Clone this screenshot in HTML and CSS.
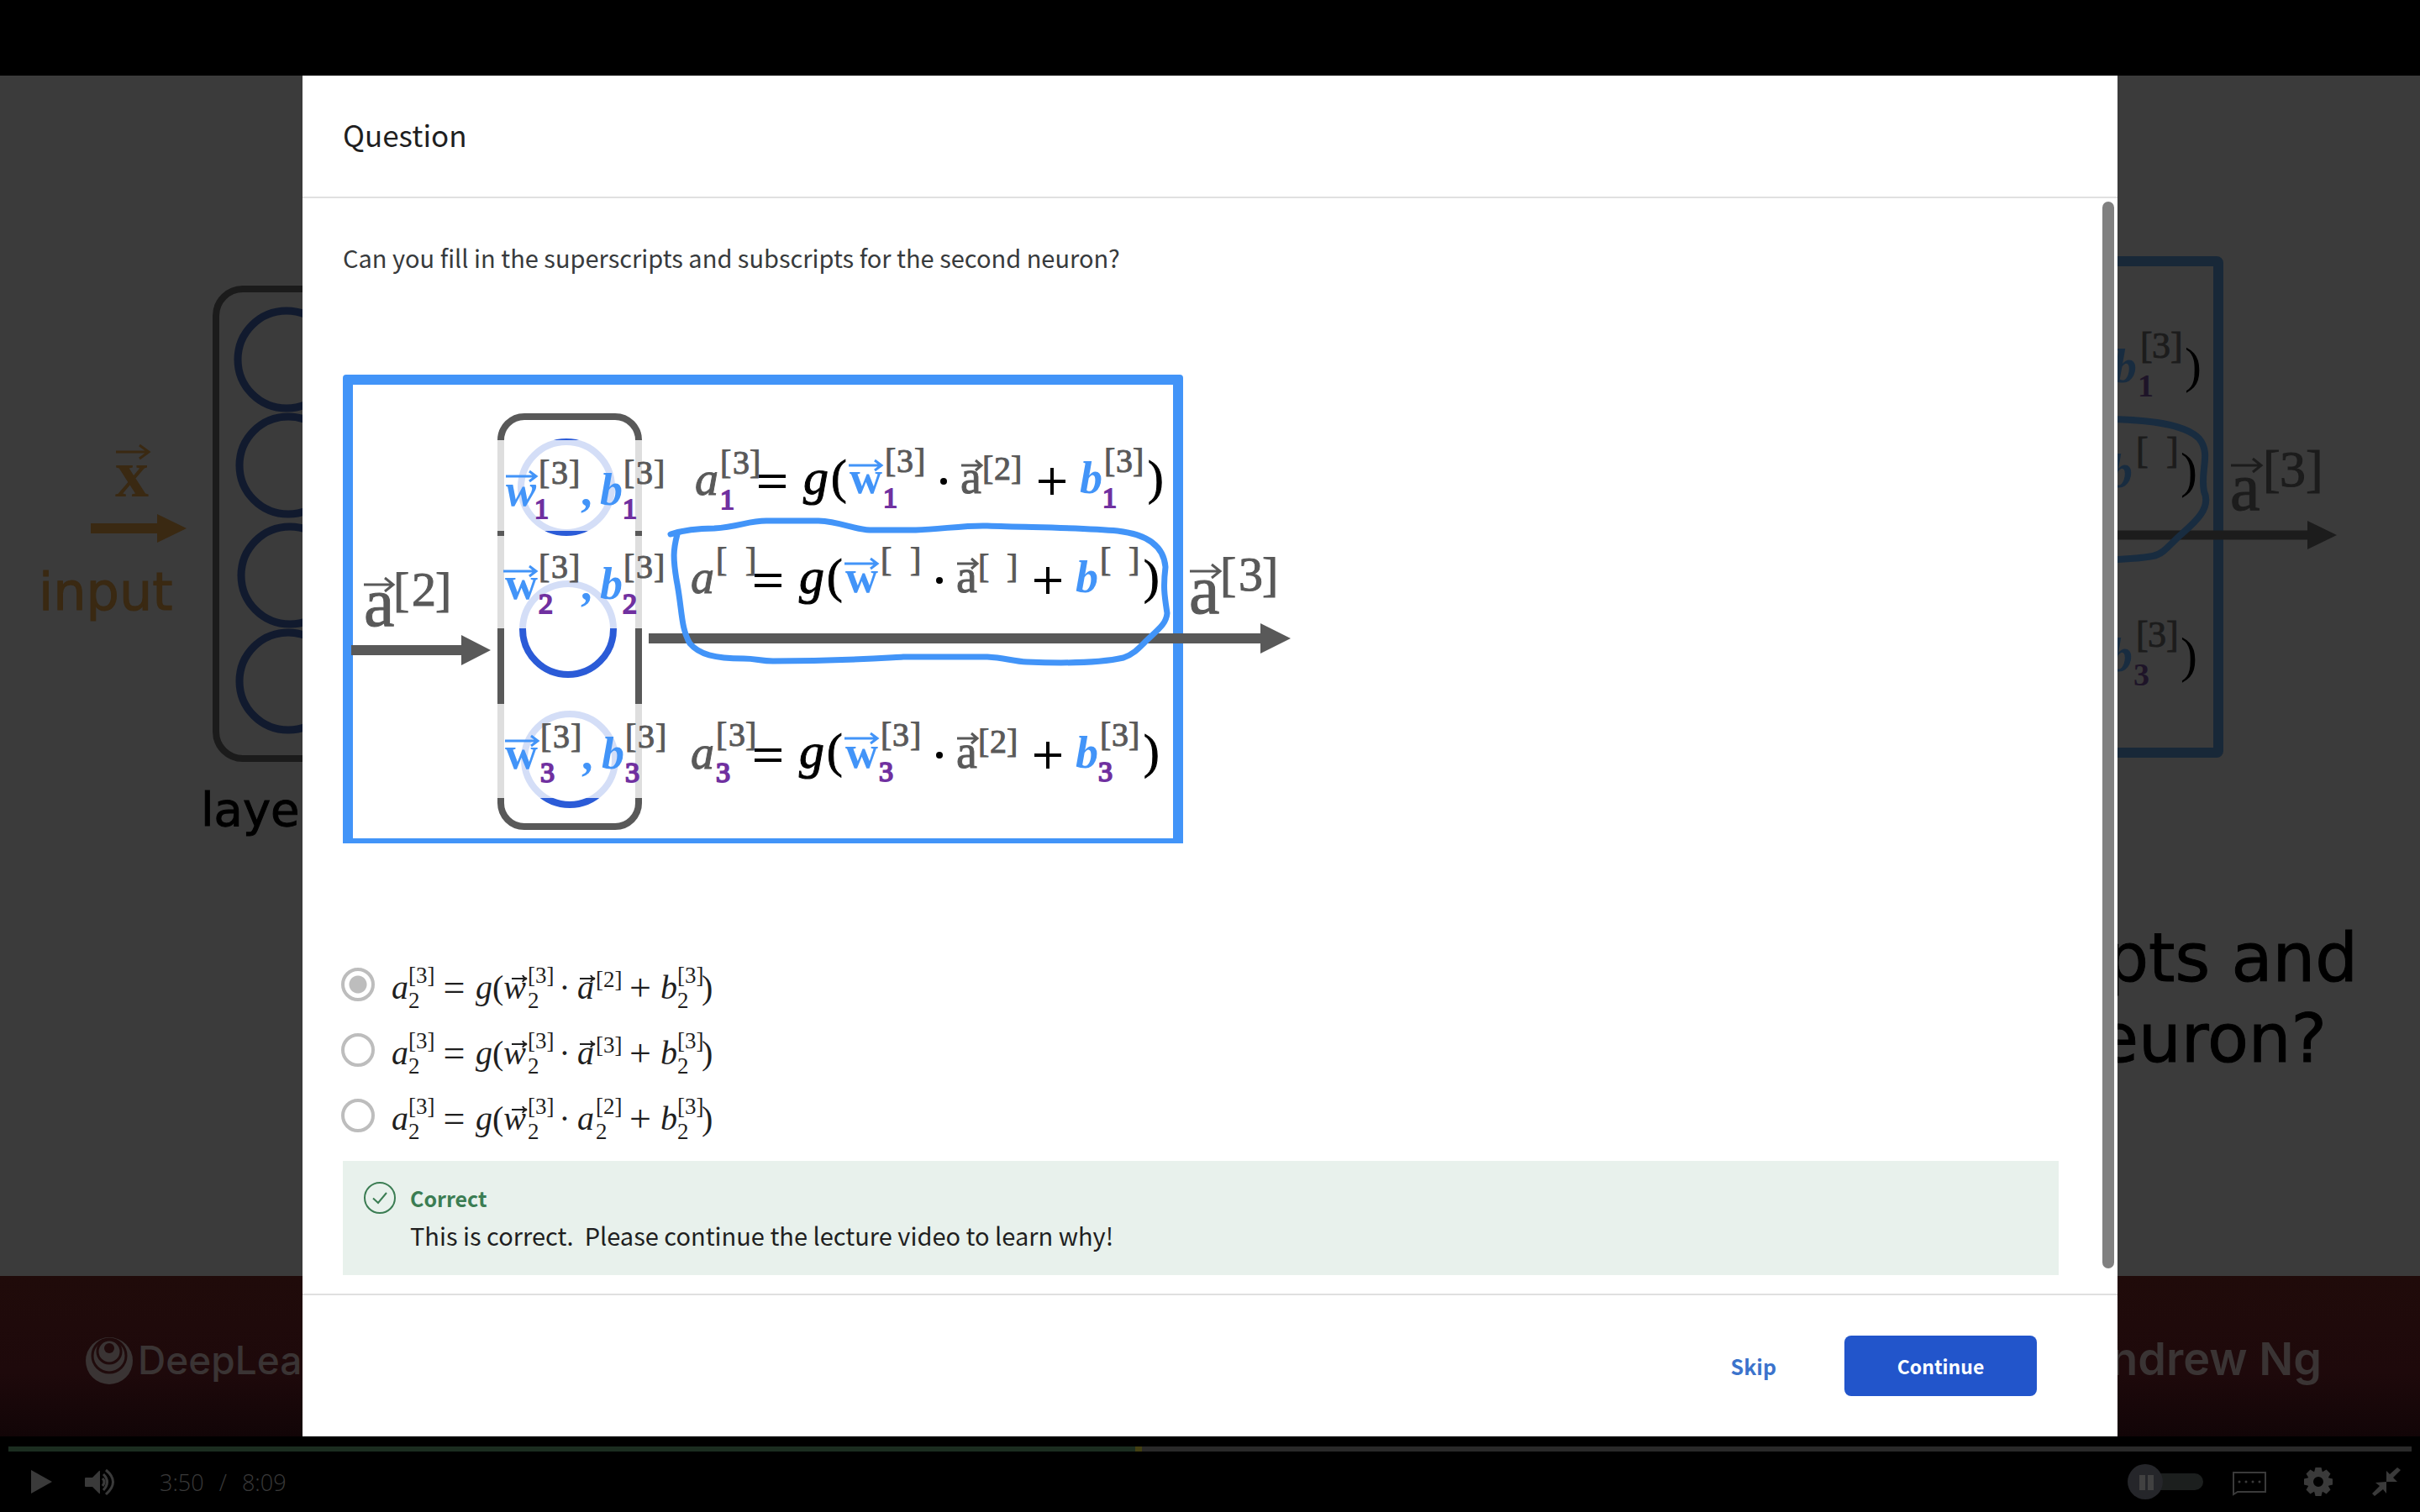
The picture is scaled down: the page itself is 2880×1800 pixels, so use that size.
FILE: index.html
```html
<!DOCTYPE html>
<html lang="en">
<head>
<meta charset="utf-8">
<meta name="viewport" content="width=device-width, initial-scale=1">
<title>Lecture video: Question</title>
<link rel="stylesheet" href="styles.css">
</head>
<body>
<main class="player">
  <div class="stage">
    <svg class="scene" viewBox="0 90 2880 1620" preserveAspectRatio="xMidYMid slice" aria-hidden="true">
      <defs>
        <linearGradient id="band" x1="0" y1="0" x2="0" y2="1">
          <stop offset="0" stop-color="#200b0a"/>
          <stop offset=".6" stop-color="#1e090b"/>
          <stop offset="1" stop-color="#120507"/>
        </linearGradient>
      </defs>
      <rect x="0" y="90" width="2880" height="1620" fill="#3b3b3b"/>
      <rect x="0" y="1519" width="2880" height="191" fill="url(#band)"/>
      <rect x="257" y="344" width="300" height="559" rx="32" fill="none" stroke="#1b1b1b" stroke-width="8"/>
      <g fill="none" stroke="#111a2e" stroke-width="9">
        <circle cx="341" cy="428" r="58"/><circle cx="343" cy="554" r="58"/>
        <circle cx="345" cy="685" r="58"/><circle cx="343" cy="811" r="58"/>
      </g>
      <g class="gold">
        <text class="serif bold s80" x="137" y="591">x</text>
        <path d="M138 538H177M166 530L177 538L166 546" fill="none" stroke="#3a2912" stroke-width="3"/>
        <path d="M108 623H187V612L222 629L187 646V635H108Z"/>
        <text class="sans gold-line s62" x="46" y="726">input</text>
      </g>
      <text class="sans s56 ink" x="239" y="983">layer</text>
      <rect x="2000" y="311" width="640" height="585" rx="2" fill="none" stroke="#182838" stroke-width="12"/>
      <path d="M2400 637H2750" stroke="#1c1c1c" stroke-width="11"/>
      <path d="M2746 620L2781 637L2746 654Z" fill="#1c1c1c"/>
      <path d="M2500 499C2560 499 2600 505 2617 522C2632 540 2618 560 2623 585C2632 605 2612 622 2596 636C2584 646 2575 660 2562 662C2540 666 2520 666 2500 667" fill="none" stroke="#182c40" stroke-width="8"/>
      <g>
        <text class="serif bold ital dim-blue s58" x="2514" y="455">b</text>
        <text class="serif dim-grey s44" x="2547 2561 2583" y="426">[3]</text>
        <text class="serif bold dim-violet s38" x="2544" y="472">1</text>
        <text class="serif ink s60" x="2600" y="455">)</text>
        <text class="serif bold ital dim-blue s58" x="2509" y="580">b</text>
        <text class="serif dim-grey s44" x="2542 2578" y="551">[]</text>
        <text class="serif ink s60" x="2595" y="580">)</text>
        <text class="serif bold ital dim-blue s58" x="2509" y="799">b</text>
        <text class="serif dim-grey s44" x="2542 2556 2578" y="770">[3]</text>
        <text class="serif bold dim-violet s38" x="2539" y="816">3</text>
        <text class="serif ink s60" x="2595" y="800">)</text>
        <text class="serif dim-grey s80" x="2654" y="607">a</text>
        <path d="M2655 554H2691M2681 546L2691 554L2681 562" fill="none" stroke="#1c1c1c" stroke-width="3"/>
        <text class="serif dim-grey s62" x="2693 2713 2744" y="579">[3]</text>
      </g>
      <text class="sans s80 ink" x="2806" y="1168" text-anchor="end">superscripts and</text>
      <text class="sans s80 ink" x="2769" y="1264" text-anchor="end">second neuron?</text>
      <g fill="none" stroke="#3a3434">
        <circle cx="130" cy="1620" r="28" fill="#3a3434" stroke="none"/>
        <circle cx="130" cy="1614" r="20" stroke="#200b0c" stroke-width="3"/>
        <circle cx="130" cy="1609" r="14" stroke="#200b0c" stroke-width="3"/>
        <circle cx="130" cy="1605" r="6" fill="#200b0c" stroke="none"/>
      </g>
      <text class="brand s46" x="164" y="1636">DeepLearning.AI</text>
      <text class="brand heavy s54" x="2763" y="1637" text-anchor="end">Andrew Ng</text>
    </svg>

    <section class="dialog" role="dialog" aria-labelledby="dialog-title">
      <header class="dialog-head"><h1 id="dialog-title">Question</h1></header>
      <div class="dialog-body">
        <p class="prompt" id="prompt">Can you fill in the superscripts and subscripts for the second neuron?</p>
        <svg class="figure" viewBox="408 446 1140 558" role="img" aria-label="Layer with three neurons and their equations">
          <rect class="paper" x="408" y="446" width="1140" height="558"/>
          <path fill="#4294f8" d="M412 446H1404Q1408 446 1408 450V1004H408V450Q408 446 412 446ZM420 458V998H1396V458Z" fill-rule="evenodd"/>
          <rect x="596" y="496" width="164" height="488" rx="28" fill="none" stroke="#595959" stroke-width="8"/>
          <g fill="none" stroke="#2b5bd7" stroke-width="8">
            <circle cx="674" cy="580" r="54"/><circle cx="676" cy="749" r="54"/><circle cx="678" cy="904" r="54"/>
          </g>
          <g fill="#fff" fill-opacity=".8">
            <rect x="588" y="524" width="184" height="108"/><rect x="588" y="638" width="184" height="110"/><rect x="588" y="838" width="184" height="112"/>
          </g>
          <g fill="#595959">
            <path d="M418 768H549V756L584 774L549 792V780H418Z"/>
            <path d="M772 754H1500V742L1536 760L1500 778V766H772Z"/>
          </g>
          <path d="M798 636Q820 629 850 629C880 627 890 620 912 620H974C1000 621 1015 630 1035 631H1090C1120 630 1150 625 1175 626C1230 628 1290 628 1330 632C1365 636 1385 650 1387 675C1384 700 1386 710 1389 730C1388 742 1380 748 1365 762C1355 772 1350 778 1337 783C1310 789 1270 790 1222 788C1205 787 1195 783 1175 782H1075C1040 784 1000 787 920 787C905 787 900 784 885 784C850 784 832 779 821 766C810 748 812 725 805 690C801 665 801 655 806 636" fill="none" stroke="#4294f8" stroke-width="7" stroke-linecap="round" stroke-linejoin="round"/>

          <g>
            <text class="serif grey s82" x="433" y="745">a</text>
            <path class="vec" d="M433 696H467M458 688L468 696L458 704"/>
            <text class="serif grey s58" x="468 490 518" y="721">[2]</text>
            <text class="serif grey s82" x="1415" y="730">a</text>
            <path class="vec" d="M1416 680H1451M1442 672L1452 680L1442 688"/>
            <text class="serif grey s58" x="1452 1474 1502" y="703">[3]</text>
          </g>

          <g>
            <text class="serif bold ital blue s54" x="602" y="602">w</text><path class="vec blue-line" d="M602 567H638M630 561L638 567L630 573"/>
            <text class="serif grey s40" x="641 656 677" y="576">[3]</text><text class="serif violet s34" x="636" y="617">1</text>
            <text class="serif bold blue s54" x="691" y="602">,</text>
            <text class="serif bold ital blue s54" x="714" y="601">b</text><text class="serif grey s40" x="742 757 778" y="576">[3]</text><text class="serif violet s34" x="741" y="617">1</text>
          </g>
          <g>
            <text class="serif bold blue s54" x="601" y="713">w</text><path class="vec blue-line" d="M599 680H638M630 674L638 680L630 686"/>
            <text class="serif grey s40" x="641 656 677" y="688">[3]</text><text class="serif violet s34" x="641" y="730">2</text>
            <text class="serif bold blue s54" x="691" y="714">,</text>
            <text class="serif bold ital blue s54" x="714" y="713">b</text><text class="serif grey s40" x="742 757 778" y="688">[3]</text><text class="serif violet s34" x="741" y="730">2</text>
          </g>
          <g>
            <text class="serif bold blue s54" x="601" y="915">w</text><path class="vec blue-line" d="M601 882H640M632 876L640 882L632 888"/>
            <text class="serif grey s40" x="643 658 679" y="890">[3]</text><text class="serif violet s34" x="643" y="931">3</text>
            <text class="serif bold blue s54" x="692" y="916">,</text>
            <text class="serif bold ital blue s54" x="716" y="915">b</text><text class="serif grey s40" x="744 759 780" y="890">[3]</text><text class="serif violet s34" x="744" y="931">3</text>
          </g>

          <g>
            <text class="serif ital grey s56" x="827" y="589">a</text><text class="serif grey s40" x="857 872 892" y="564">[3]</text><text class="serif violet s34" x="857" y="606">1</text>
            <path class="op" d="M903 567H935M903 579H935"/>
            <text class="serif ital dark s60" x="956" y="588">g</text><text class="serif dark s56" x="989" y="587">(</text>
            <text class="serif bold blue s54" x="1011" y="587">w</text><path class="vec blue-line" d="M1010 554H1049M1041 548L1049 554L1041 560"/>
            <text class="serif grey s40" x="1053 1067 1088" y="562">[3]</text><text class="serif violet s34" x="1051" y="604">1</text>
            <circle cx="1123" cy="573" r="4"/>
            <text class="serif grey s56" x="1143" y="587">a</text><path class="vec" d="M1144 554H1168M1161 548L1168 554L1161 560"/>
            <text class="serif grey s40" x="1169 1183 1203" y="571">[2]</text>
            <path class="op" d="M1236 573H1268M1252 557V589"/>
            <text class="serif bold ital blue s54" x="1285" y="587">b</text><text class="serif grey s40" x="1314 1328 1348" y="562">[3]</text><text class="serif violet s34" x="1312" y="604">1</text>
            <text class="serif dark s56" x="1366" y="588">)</text>
          </g>
          <g transform="translate(-5 118)">
            <text class="serif ital grey s56" x="827" y="588">a</text><text class="serif grey s40" x="857 892" y="562">[]</text>
            <path class="op" d="M903 567H935M903 579H935"/>
            <text class="serif ital dark s60" x="956" y="588">g</text><text class="serif dark s56" x="989" y="587">(</text>
            <text class="serif bold blue s54" x="1011" y="587">w</text><path class="vec blue-line" d="M1010 553H1049M1041 547L1049 553L1041 559"/>
            <text class="serif grey s40" x="1053 1088" y="562">[]</text>
            <circle cx="1123" cy="573" r="4"/>
            <text class="serif grey s56" x="1143" y="587">a</text><path class="vec" d="M1144 553H1168M1161 547L1168 553L1161 559"/>
            <text class="serif grey s40" x="1169 1203" y="570">[]</text>
            <path class="op" d="M1236 573H1268M1252 557V589"/>
            <text class="serif bold ital blue s54" x="1285" y="587">b</text><text class="serif grey s40" x="1314 1348" y="562">[]</text>
            <text class="serif dark s56" x="1366" y="588">)</text>
          </g>
          <g transform="translate(-5 326)">
            <text class="serif ital grey s56" x="827" y="589">a</text><text class="serif grey s40" x="857 872 892" y="562">[3]</text><text class="serif violet s34" x="857" y="605">3</text>
            <path class="op" d="M903 567H935M903 579H935"/>
            <text class="serif ital dark s60" x="956" y="588">g</text><text class="serif dark s56" x="989" y="587">(</text>
            <text class="serif bold blue s54" x="1011" y="588">w</text><path class="vec blue-line" d="M1010 553H1049M1041 547L1049 553L1041 559"/>
            <text class="serif grey s40" x="1053 1067 1088" y="562">[3]</text><text class="serif violet s34" x="1051" y="604">3</text>
            <circle cx="1123" cy="573" r="4"/>
            <text class="serif grey s56" x="1143" y="588">a</text><path class="vec" d="M1144 553H1168M1161 547L1168 553L1161 559"/>
            <text class="serif grey s40" x="1169 1183 1203" y="570">[2]</text>
            <path class="op" d="M1236 573H1268M1252 557V589"/>
            <text class="serif bold ital blue s54" x="1285" y="588">b</text><text class="serif grey s40" x="1314 1328 1348" y="562">[3]</text><text class="serif violet s34" x="1312" y="604">3</text>
            <text class="serif dark s56" x="1366" y="588">)</text>
          </g>
        </svg>

        <form class="options" role="radiogroup" aria-labelledby="prompt">
          <label class="option">
            <input type="radio" name="answer" checked>
            <span class="math"><i>a</i><span class="scripts"><span>[3]</span><span>2</span></span><span class="rel">=</span><i>g</i><span>(</span><i class="arrowed">w<svg viewBox="0 0 20 10"><path d="M1 5H18M14 1Q15 4 19 5Q15 6 14 9"/></svg></i><span class="scripts"><span>[3]</span><span>2</span></span><span class="dot">·</span><i class="arrowed">a<svg viewBox="0 0 20 10"><path d="M1 5H18M14 1Q15 4 19 5Q15 6 14 9"/></svg></i><span class="scripts single"><span>[2]</span></span><span class="plus">+</span><i>b</i><span class="scripts"><span>[3]</span><span>2</span></span><span>)</span></span>
          </label>
          <label class="option">
            <input type="radio" name="answer">
            <span class="math"><i>a</i><span class="scripts"><span>[3]</span><span>2</span></span><span class="rel">=</span><i>g</i><span>(</span><i class="arrowed">w<svg viewBox="0 0 20 10"><path d="M1 5H18M14 1Q15 4 19 5Q15 6 14 9"/></svg></i><span class="scripts"><span>[3]</span><span>2</span></span><span class="dot">·</span><i class="arrowed">a<svg viewBox="0 0 20 10"><path d="M1 5H18M14 1Q15 4 19 5Q15 6 14 9"/></svg></i><span class="scripts single"><span>[3]</span></span><span class="plus">+</span><i>b</i><span class="scripts"><span>[3]</span><span>2</span></span><span>)</span></span>
          </label>
          <label class="option">
            <input type="radio" name="answer">
            <span class="math"><i>a</i><span class="scripts"><span>[3]</span><span>2</span></span><span class="rel">=</span><i>g</i><span>(</span><i class="arrowed">w<svg viewBox="0 0 20 10"><path d="M1 5H18M14 1Q15 4 19 5Q15 6 14 9"/></svg></i><span class="scripts"><span>[3]</span><span>2</span></span><span class="dot">·</span><i class="arrowed">a</i><span class="scripts"><span>[2]</span><span>2</span></span><span class="plus">+</span><i>b</i><span class="scripts"><span>[3]</span><span>2</span></span><span>)</span></span>
          </label>
        </form>

        <div class="feedback" role="status">
          <svg class="feedback-icon" viewBox="0 0 40 40" aria-hidden="true"><circle cx="20" cy="20" r="18"/><path d="M12 20.500L18 26L28 14"/></svg>
          <div>
            <strong class="feedback-title">Correct</strong>
            <p class="feedback-text">This is correct.&nbsp; Please continue the lecture video to learn why!</p>
          </div>
        </div>
        <div class="scroll-thumb"></div>
      </div>
      <footer class="dialog-foot">
        <button class="btn-link" type="button">Skip</button>
        <button class="btn-primary" type="button">Continue</button>
      </footer>
    </section>
  </div>

  <div class="controls">
    <div class="progress"><div class="played" style="width:46.900%"></div><div class="cue"></div></div>
    <div class="bar">
      <div class="group left">
        <button type="button" aria-label="Play"><svg width="40" height="40" viewBox="0 0 40 40"><path fill="currentColor" d="M7 6L32 20L7 34Z"/></svg></button>
        <button type="button" aria-label="Volume"><svg width="40" height="40" viewBox="0 0 40 40"><path fill="currentColor" d="M2 15H10L18 7Q19 6 19 8V33Q19 35 18 34L10 26H2Q1 26 1 25V16Q1 15 2 15Z"/><path fill="none" stroke="currentColor" stroke-width="3" d="M22 16Q26 20 22 25M23 11Q32 20 23 30M26 6Q43 20 26 35"/></svg></button>
        <span class="time"><span>3:50</span><span>/</span><span>8:09</span></span>
      </div>
      <div class="group right">
        <button class="autoplay" type="button" role="switch" aria-checked="false" aria-label="Autoplay"><svg width="92" height="42" viewBox="0 0 92 42"><rect x="20" y="11" width="71" height="20" rx="10" fill="#1c1f1e"/><circle cx="22" cy="21" r="21" fill="#25262a"/><path fill="#414141" d="M15 13H22V31H15ZM25 13H32V31H25Z"/></svg></button>
        <button type="button" aria-label="Subtitles"><svg width="42" height="40" viewBox="0 0 42 40"><path fill="none" stroke="currentColor" stroke-width="2" d="M2 9H40V32H7L2 35Z"/><path stroke="currentColor" stroke-width="3" stroke-linecap="round" stroke-dasharray="0 8" d="M9 20H34"/></svg></button>
        <button type="button" aria-label="Settings"><svg width="40" height="40" viewBox="-20 -20 40 40"><g fill="currentColor"><path fill-rule="evenodd" d="M0-13A13 13 0 1 0 0 13A13 13 0 1 0 0-13ZM0-6A6 6 0 1 1 0 6A6 6 0 1 1 0-6Z"/><path id="tooth" d="M-3.500-17H3.500L5-11H-5Z"/><use href="#tooth" transform="rotate(45)"/><use href="#tooth" transform="rotate(90)"/><use href="#tooth" transform="rotate(135)"/><use href="#tooth" transform="rotate(180)"/><use href="#tooth" transform="rotate(225)"/><use href="#tooth" transform="rotate(270)"/><use href="#tooth" transform="rotate(315)"/></g></svg></button>
        <button type="button" aria-label="Exit full screen"><svg width="40" height="40" viewBox="0 0 40 40"><path fill="currentColor" d="M20 7L24 11L33 3L37 6L28 15L33 20H20ZM20 20V34L16 29L6 37L3 34L12 25L7 21Z"/></svg></button>
      </div>
    </div>
  </div>
</main>
</body>
</html>
```
FILE: styles.css
```css
*, *::before, *::after { box-sizing: border-box; }

body {
  margin: 0;
  background: #000;
  color: #1f1f1f;
  font-family: "Noto Sans CJK SC", "Noto Sans", sans-serif;
}

button {
  padding: 0;
  border: 0;
  background: none;
  color: inherit;
  font: inherit;
  cursor: pointer;
}

svg { display: block; }

/* Player */
.player {
  display: flex;
  flex-direction: column;
  min-height: 100vh;
  padding-top: 90px;
}

.stage {
  position: relative;
  flex: 1;
  display: flex;
  justify-content: center;
  overflow: hidden;
}

.scene {
  position: absolute;
  inset: 0;
  width: 100%;
  height: 100%;
}

/* Dialog */
.dialog {
  position: relative;
  display: flex;
  flex-direction: column;
  width: 75%;
  background: #fff;
}

.dialog-head {
  padding: 42px 48px 46px;
  border-bottom: 2px solid #e0e0e0;
}

.dialog-head h1 {
  margin: 0;
  font-size: 35px;
  font-weight: 400;
  line-height: 56px;
}

.dialog-body {
  position: relative;
  flex: 1;
  padding: 46px 70px 22px 48px;
}

.prompt {
  margin: 0;
  color: #373a3c;
  font-size: 29px;
  line-height: 48px;
}

.figure {
  width: 1140px;
  max-width: 100%;
  margin-top: 116px;
}

.scroll-thumb {
  position: absolute;
  top: 4px;
  right: 4px;
  bottom: 30px;
  width: 14px;
  border-radius: 7px;
  background: #808080;
}

/* Options */
.options { margin-top: 129px; }

.option {
  display: flex;
  align-items: center;
  gap: 20px;
  height: 78px;
}

.option input {
  appearance: none;
  width: 40px;
  height: 40px;
  margin: 0 0 0 -2px;
  border: 4px solid #bdbdbd;
  border-radius: 50%;
}

.option input:checked {
  background: radial-gradient(circle, #bdbdbd 10px, transparent 11px);
}

.math {
  display: flex;
  align-items: center;
  padding-top: 8px;
  font-family: "Liberation Serif", serif;
  font-size: 40px;
  line-height: 70px;
}

.arrowed { position: relative; padding-right: 2px; }

.arrowed svg {
  position: absolute;
  top: 19px;
  right: 0;
  width: 20px;
  height: 10px;
  fill: none;
  stroke: currentColor;
  stroke-width: 2;
}

.scripts {
  display: flex;
  flex-direction: column;
  width: 29px;
  font-size: 27px;
  line-height: 30px;
}

.single { align-self: flex-start; margin-top: 10px; }

.rel, .plus { font-size: 46px; text-align: center; }
.rel { width: 51px; }
.plus { width: 48px; }
.dot { width: 30px; text-align: center; }

/* Feedback */
.feedback {
  display: flex;
  gap: 16px;
  margin-top: 15px;
  padding: 24px 24px;
  background: #e8f1ec;
}

.feedback-icon {
  width: 40px;
  height: 40px;
  fill: none;
  stroke: #3b7d53;
  stroke-width: 2;
}

.feedback-title {
  display: block;
  color: #3b7d53;
  font-size: 25px;
  font-weight: 700;
  line-height: 40px;
}

.feedback-text {
  margin: 0;
  font-size: 29px;
  line-height: 48px;
}

/* Dialog actions */
.dialog-foot {
  display: flex;
  align-items: center;
  justify-content: flex-end;
  gap: 81px;
  padding: 48px 96px;
  border-top: 2px solid #e0e0e0;
  font-size: 25px;
  font-weight: 700;
}

.btn-link { color: #3b73cc; }

.btn-primary {
  width: 229px;
  height: 72px;
  border-radius: 8px;
  background: #2255cb;
  color: #fff;
  font-size: 23px;
}

/* Control bar */
.controls { padding: 12px 10px 0; color: #3a3a3a; }

.progress { display: flex; height: 6px; background: #2a2a2a; }
.played { background: #1b2d20; }
.cue { width: 8px; background: #434012; }

.bar {
  display: flex;
  align-items: center;
  justify-content: space-between;
  height: 72px;
  padding: 0 10px 0 20px;
}

.group { display: flex; align-items: center; }
.left { gap: 30px; }
.right { gap: 41px; }
.autoplay { margin-right: -8px; }

.time {
  display: flex;
  gap: 18px;
  margin-left: 20px;
  font-family: "Open Sans", sans-serif;
  font-size: 27px;
  font-weight: 300;
}

/* Lettering inside the drawings */
.serif { font-family: "Liberation Serif", serif; }
.sans { font-family: "DejaVu Sans", sans-serif; stroke: #000; }
.gold-line { stroke: #3a2912; }
.brand { font-family: Inter, sans-serif; font-weight: 500; fill: #3a3434; }
.heavy { font-weight: 600; }
.bold { font-weight: 700; }
.ital { font-style: italic; }
.s34 { font-size: 34px; }
.s38 { font-size: 38px; }
.s40 { font-size: 40px; }
.s44 { font-size: 44px; }
.s46 { font-size: 46px; }
.s54 { font-size: 54px; }
.s56 { font-size: 56px; }
.s58 { font-size: 58px; }
.s60 { font-size: 60px; }
.s62 { font-size: 62px; }
.s80 { font-size: 80px; }
.s82 { font-size: 82px; }
.ink { fill: #000; }
.gold { fill: #3a2912; }
.dim-blue { fill: #182c40; }
.dim-grey { fill: #1c1c1c; stroke: #1c1c1c; }
.dim-violet { fill: #1e1428; }
.paper { fill: #fff; }
.dark { fill: #000; stroke: #000; }
.grey { fill: #595959; stroke: #595959; }
.blue { fill: #4294f8; }
.violet { fill: #7030a0; stroke: #7030a0; stroke-width: 2; }
.vec { fill: none; stroke: #595959; stroke-width: 3; }
.blue-line { stroke: #4294f8; }
.op { fill: none; stroke: #000; stroke-width: 4; }
```
